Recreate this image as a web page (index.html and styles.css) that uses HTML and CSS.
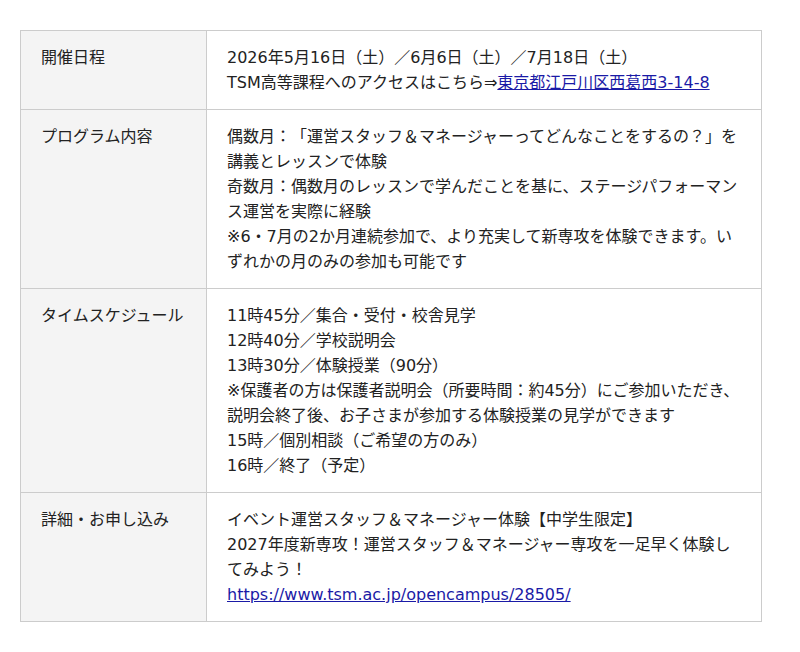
FILE: index.html
```html
<!DOCTYPE html>
<html lang="ja">
<head>
    <meta charset="UTF-8">
    <meta name="viewport" content="width=device-width, initial-scale=1.0">
    <title>イベント運営スタッフ＆マネージャー体験</title>
    <link rel="stylesheet" href="styles.css">
</head>
<body>
    <div id="main">
        <table class="info-table">
            <tr>
                <th>開催日程</th>
                <td>2026年5月16日（土）／6月6日（土）／7月18日（土）<br>
                    TSM高等課程へのアクセスはこちら⇒<a href="#">東京都江戸川区西葛西3-14-8</a></td>
            </tr>
            <tr>
                <th>プログラム内容</th>
                <td>偶数月：「運営スタッフ＆マネージャーってどんなことをするの？」を講義とレッスンで体験<br>
                    奇数月：偶数月のレッスンで学んだことを基に、ステージパフォーマンス運営を実際に経験<br>
                    ※6・7月の2か月連続参加で、より充実して新専攻を体験できます。いずれかの月のみの参加も可能です</td>
            </tr>
            <tr>
                <th>タイムスケジュール</th>
                <td>11時45分／集合・受付・校舎見学<br>
                    12時40分／学校説明会<br>
                    13時30分／体験授業（90分）<br>
                    ※保護者の方は保護者説明会（所要時間：約45分）にご参加いただき、説明会終了後、お子さまが参加する体験授業の見学ができます<br>
                    15時／個別相談（ご希望の方のみ）<br>
                    16時／終了（予定）</td>
            </tr>
            <tr>
                <th>詳細・お申し込み</th>
                <td>イベント運営スタッフ＆マネージャー体験【中学生限定】<br>
                    2027年度新専攻！運営スタッフ＆マネージャー専攻を一足早く体験してみよう！<br>
                    <a href="#">https://www.tsm.ac.jp/opencampus/28505/</a></td>
            </tr>
        </table>
    </div>
</body>
</html>
```

FILE: styles.css
```css
body {
    margin: 0;
    background: #fff;
    color: #222;
    font-family: "DejaVu Sans", "Noto Sans CJK JP", sans-serif;
    font-size: 16px;
    line-height: 25px;
    text-spacing-trim: space-all;
}
#main {
    padding: 30px 20px;
}
.info-table {
    width: 742px;
    border-collapse: collapse;
    border: 1px solid #ccc;
}
.info-table th,
.info-table td {
    border: 1px solid #ccc;
    padding: 14px 20px;
    vertical-align: top;
    text-align: left;
}
.info-table th {
    width: 145px;
    background-color: #f4f4f4;
    font-weight: normal;
}
.info-table a {
    color: #1a1aa6;
}
```
